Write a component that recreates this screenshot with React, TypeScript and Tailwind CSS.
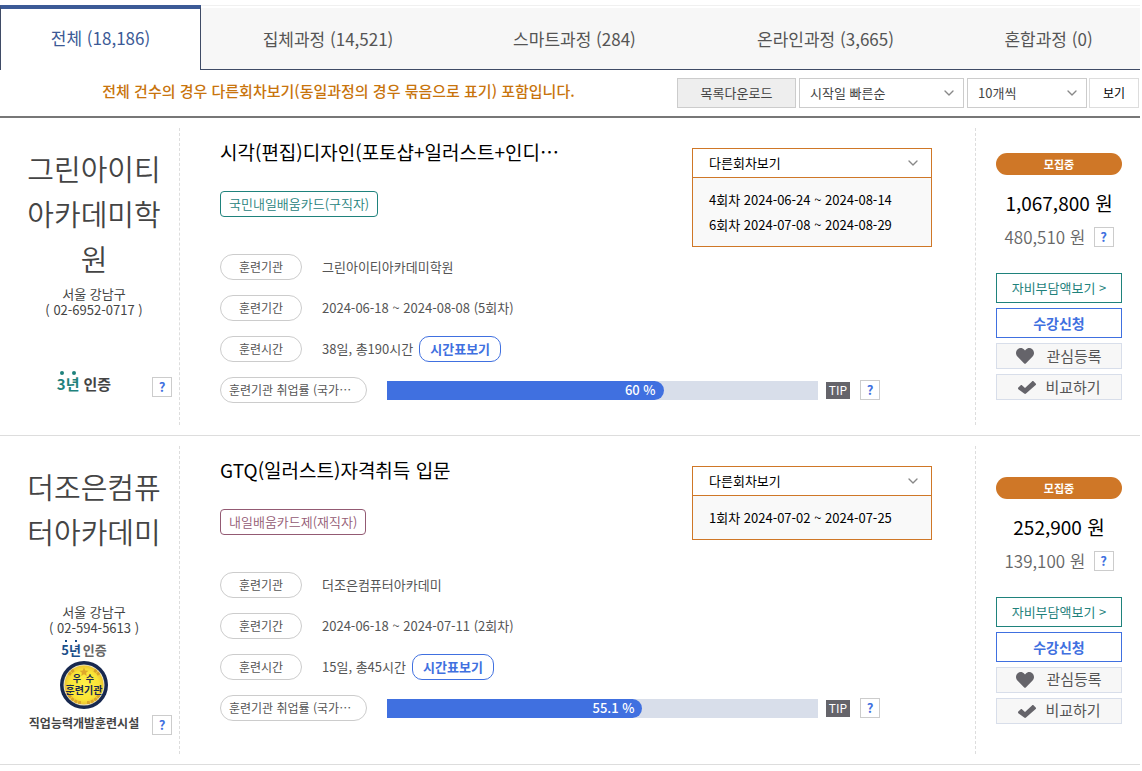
import { ChevronDown } from "lucide-react";
import { FaHeart } from "react-icons/fa";

type Course = {
  id: string;
  academy: string;
  region: string;
  phone: string;
  title: string;
  card: string;
  cardStyle: string;
  period: string;
  hours: string;
  rate: number;
  sessions: string[];
  price: string;
  selfPay: string;
  medal: boolean;
};

const tabs = [
  "전체 (18,186)",
  "집체과정 (14,521)",
  "스마트과정 (284)",
  "온라인과정 (3,665)",
  "혼합과정 (0)",
];

const courses: Course[] = [
  {
    id: "green",
    academy: "그린아이티아카데미학원",
    region: "서울 강남구",
    phone: "( 02-6952-0717 )",
    title: "시각(편집)디자인(포토샵+일러스트+인디⋯",
    card: "국민내일배움카드(구직자)",
    cardStyle: "border-[#1f827c] text-[#1f827c]",
    period: "2024-06-18 ~ 2024-08-08 (5회차)",
    hours: "38일, 총190시간",
    rate: 60,
    sessions: [
      "4회차 2024-06-24 ~ 2024-08-14",
      "6회차 2024-07-08 ~ 2024-08-29",
    ],
    price: "1,067,800 원",
    selfPay: "480,510 원",
    medal: false,
  },
  {
    id: "thejoeun",
    academy: "더조은컴퓨터아카데미",
    region: "서울 강남구",
    phone: "( 02-594-5613 )",
    title: "GTQ(일러스트)자격취득 입문",
    card: "내일배움카드제(재직자)",
    cardStyle: "border-[#935a73] text-[#935a73]",
    period: "2024-06-18 ~ 2024-07-11 (2회차)",
    hours: "15일, 총45시간",
    rate: 55.1,
    sessions: ["1회차 2024-07-02 ~ 2024-07-25"],
    price: "252,900 원",
    selfPay: "139,100 원",
    medal: true,
  },
];

function Help({ label }: { label: string }) {
  return (
    <button
      type="button"
      aria-label={label}
      className="flex size-5 shrink-0 items-center justify-center border border-[#ccc] bg-white text-[13px] font-bold text-[#4070e0]"
    >
      ?
    </button>
  );
}

function CheckIcon() {
  return (
    <svg viewBox="0 0 20 16" className="h-4 w-5" fill="#65646a">
      <path d="M1.300 8.600l2.200-2.200c.5-.5 1.200-.5 1.700 0L8 9.100l7-6.700c.5-.5 1.200-.5 1.700 0l2 2c.5.5.5 1.200 0 1.700L9 14.600c-.5.5-1.300.5-1.800 0l-5.900-4.400c-.5-.5-.5-1.100 0-1.600z" />
    </svg>
  );
}

function Medal() {
  return (
    <svg viewBox="0 0 48 48" className="size-12">
      <defs>
        <radialGradient id="gold">
          <stop offset="0" stopColor="#fff04a" />
          <stop offset="0.75" stopColor="#fbe536" />
          <stop offset="1" stopColor="#ecc532" />
        </radialGradient>
      </defs>
      <circle cx="24" cy="24" r="24" fill="#17284f" />
      <circle cx="24" cy="24" r="20.5" fill="#e9e3c0" />
      <circle cx="24" cy="24" r="19.5" fill="url(#gold)" />
      <path
        d="M24 6.5l1.3 2.9 3.2.3-2.4 2.1.7 3.1-2.8-1.6-2.8 1.6.7-3.1-2.4-2.1 3.2-.3z"
        fill="#dfa92a"
      />
      <path
        d="M9 34c3 5 7 7.500 12 7.500M39 34c-3 5-7 7.500-12 7.500M9 14c1-2 3-4 5-5M39 14c-1-2-3-4-5-5"
        fill="none"
        stroke="#d9a52a"
        strokeWidth="3"
        strokeDasharray="3 1"
      />
      <g fill="#17284f" fontWeight="700" textAnchor="middle">
        <text x="17" y="21" fontSize="9">
          우
        </text>
        <text x="30" y="21" fontSize="9">
          수
        </text>
        <text x="24" y="33" fontSize="10">
          훈련기관
        </text>
      </g>
    </svg>
  );
}

function Certification({ medal }: { medal: boolean }) {
  if (!medal) {
    return (
      <div className="flex justify-center gap-1 text-[15px] leading-[18px] font-bold text-[#444]">
        <span className="flex flex-col text-[#1f827c]">
          <span className="flex justify-center gap-2">
            <i className="size-1 rounded-full bg-[#1f827c]" />
            <i className="size-1 rounded-full bg-[#1f827c]" />
          </span>
          3년
        </span>
        <span className="pt-1">인증</span>
      </div>
    );
  }
  return (
    <div className="flex flex-col items-center text-[13px] leading-4 font-bold text-[#666]">
      <div className="flex gap-0.5">
        <span className="flex flex-col text-[#1b4f8a]">
          <span className="flex justify-center gap-2">
            <i className="size-0.5 bg-[#1b4f8a]" />
            <i className="size-0.5 bg-[#1b4f8a]" />
          </span>
          5년
        </span>
        <span className="pt-0.5">인증</span>
      </div>
      <div className="mt-[3px] mb-1.5">
        <Medal />
      </div>
      <span className="text-xs leading-4 whitespace-nowrap text-[#444]">
        직업능력개발훈련시설
      </span>
    </div>
  );
}

function Pill({ children }: { children: string }) {
  return (
    <dt className="flex h-[26px] w-[82px] shrink-0 items-center justify-center rounded-full border border-[#ccc] text-xs text-[#555]">
      {children}
    </dt>
  );
}

function CourseRow({ course }: { course: Course }) {
  return (
    <li className="flex border-b border-[#ddd]">
      <section className="my-2.5 w-[180px] shrink-0 border-r border-dashed border-[#ddd] pt-[18px] text-center text-[#444]">
        <div className="pr-[11px] pl-5">
          <h2 className="min-h-[135px] text-[29px] leading-[45px] font-[350] break-all">
            {course.academy}
          </h2>
          <p className="mt-[5px] text-[13px] leading-4">
            {course.region}
            <br />
            {course.phone}
          </p>
        </div>
        <div
          className={
            course.medal
              ? "flex items-end gap-1 pt-1 pr-[7px] pb-[19px] pl-5"
              : "flex items-end gap-1 pt-[53px] pr-[7px] pb-7 pl-5"
          }
        >
          <div className="flex-1 pb-1">
            <Certification medal={course.medal} />
          </div>
          <Help label="인증 도움말" />
        </div>
      </section>

      <section className="my-2.5 min-w-0 flex-1 border-r border-dashed border-[#ddd] pl-10">
        <div className="flex min-h-[126px] items-start pr-[43px]">
          <div className="min-w-0 flex-1 pt-2.5">
            <h3 className="text-[19px] leading-7 text-black">
              <a href="#course">{course.title}</a>
            </h3>
            <span
              className={`mt-[25px] inline-flex h-[26px] items-center rounded border px-2 text-[13px] font-[350] ${course.cardStyle}`}
            >
              {course.card}
            </span>
          </div>
          <div className="mt-5 w-60 shrink-0 border border-[#cf7727] text-[13px] text-black">
            <button
              type="button"
              aria-expanded="true"
              className="flex h-[29px] w-full items-center justify-between border-b border-[#cf7727] bg-white pr-2.5 pl-4"
            >
              다른회차보기
              <ChevronDown className="size-4 text-[#888]" />
            </button>
            <ul className="bg-[#f9f9f9] px-4 py-[9px] leading-[25px]">
              {course.sessions.map((session) => (
                <li key={session}>{session}</li>
              ))}
            </ul>
          </div>
        </div>

        <dl className="flex flex-col gap-[15px] text-[13px] text-[#555]">
          <div className="flex items-center gap-5">
            <Pill>훈련기관</Pill>
            <dd>{course.academy}</dd>
          </div>
          <div className="flex items-center gap-5">
            <Pill>훈련기간</Pill>
            <dd>{course.period}</dd>
          </div>
          <div className="flex items-center gap-5">
            <Pill>훈련시간</Pill>
            <dd className="flex items-center gap-1.5">
              {course.hours}
              <button
                type="button"
                className="h-[26px] w-[82px] rounded-[10px] border border-[#4070e0] font-bold text-[#4070e0]"
              >
                시간표보기
              </button>
            </dd>
          </div>
          <div className="flex items-center pr-[95px]">
            <dt className="mr-5 flex h-[26px] w-[147px] shrink-0 items-center rounded-full border border-[#ccc] pl-2 text-xs whitespace-nowrap">
              훈련기관 취업률 (국가⋯
            </dt>
            <dd className="flex flex-1 items-center">
              <div className="h-[19px] flex-1 bg-[#d8deea]">
                <div
                  className="box-content flex h-full items-center justify-end rounded-r-full bg-[#4070e0] pl-[18px] text-[13px] font-medium text-white"
                  style={{ width: `${course.rate}%` }}
                >
                  <span className="pr-2">{course.rate} %</span>
                </div>
              </div>
              <span className="mr-2.5 ml-2 flex h-[17px] w-6 items-center justify-center bg-[#65646a] text-xs text-white">
                TIP
              </span>
              <Help label="취업률 도움말" />
            </dd>
          </div>
        </dl>
      </section>

      <section className="flex w-[164px] shrink-0 flex-col justify-center pr-[18px] pl-5 text-center">
        <span className="h-[22px] rounded-full bg-[#cf7727] text-[11px] leading-[22px] font-bold text-white">
          모집중
        </span>
        <strong className="mt-3 text-[19px] leading-8 font-normal text-black">
          {course.price}
        </strong>
        <div className="mt-2 flex items-center justify-center gap-2 text-[17px] leading-5 font-[350] text-[#666]">
          {course.selfPay}
          <Help label="자비부담액 도움말" />
        </div>
        <div className="mt-[26px] flex flex-col gap-[5px]">
          <button
            type="button"
            className="h-[30px] border border-[#1f827c] text-[13px] text-[#1f827c]"
          >
            자비부담액보기 &gt;
          </button>
          <button
            type="button"
            className="h-[30px] border border-[#4070e0] text-sm font-bold text-[#4070e0]"
          >
            수강신청
          </button>
          <button
            type="button"
            className="flex h-[26px] items-center justify-center gap-3 border border-[#d8deea] bg-[#f7f7f7] text-[15px] text-[#555]"
          >
            <FaHeart className="size-[18px] text-[#65646a]" />
            관심등록
          </button>
          <button
            type="button"
            className="flex h-[26px] items-center justify-center gap-2 border border-[#d8deea] bg-[#f7f7f7] text-[15px] text-[#555]"
          >
            <CheckIcon />
            비교하기
          </button>
        </div>
      </section>
    </li>
  );
}

export default function App() {
  return (
    <main
      lang="ko"
      className="bg-white pt-[5px] pr-0.5 font-['Noto_Sans_CJK_KR',sans-serif]"
    >
      <nav className="grid grid-cols-[201fr_254fr_239fr_263fr_183fr] text-[17px]">
        {tabs.map((tab, i) => (
          <a
            key={tab}
            href="#list"
            aria-current={i === 0 ? "page" : undefined}
            className={
              i === 0
                ? "flex h-[65px] items-center justify-center border-x border-t-4 border-x-[#3f4b66] border-t-[#3c5a96] pb-1 text-[#3c5a96]"
                : "flex h-[65px] items-center justify-center border-t border-b border-t-[#f0f0f0] border-b-[#3f4b66] bg-[#f7f7f7] bg-clip-content pt-0.5 text-[#555]"
            }
          >
            {tab}
          </a>
        ))}
      </nav>

      <form className="flex h-12 items-center border-b-2 border-[#777] text-[13px] text-[#444]">
        <p className="flex-1 pb-1 text-center text-[15px] font-medium text-[#c8740c]">
          전체 건수의 경우 다른회차보기(동일과정의 경우 묶음으로 표기)
          포함입니다.
        </p>
        <button
          type="button"
          className="mr-[3px] h-[30px] w-[119px] border border-[#ccc] bg-[#eee]"
        >
          목록다운로드
        </button>
        <div className="mr-[3px] grid w-[165px] items-center">
          <select
            aria-label="정렬"
            className="col-start-1 row-start-1 h-[30px] appearance-none border border-[#ccc] bg-white px-2.5"
          >
            <option>시작일 빠른순</option>
          </select>
          <ChevronDown className="pointer-events-none col-start-1 row-start-1 mr-[7px] size-4 justify-self-end text-[#888]" />
        </div>
        <div className="mr-0.5 grid w-[120px] items-center">
          <select
            aria-label="목록 개수"
            className="col-start-1 row-start-1 h-[30px] appearance-none border border-[#ccc] bg-white px-2.5"
          >
            <option>10개씩</option>
          </select>
          <ChevronDown className="pointer-events-none col-start-1 row-start-1 mr-[7px] size-4 justify-self-end text-[#888]" />
        </div>
        <button
          type="submit"
          className="mr-px h-[30px] w-[50px] border border-[#ddd] bg-white text-xs text-black"
        >
          보기
        </button>
      </form>

      <ul>
        {courses.map((course) => (
          <CourseRow key={course.id} course={course} />
        ))}
      </ul>
    </main>
  );
}
